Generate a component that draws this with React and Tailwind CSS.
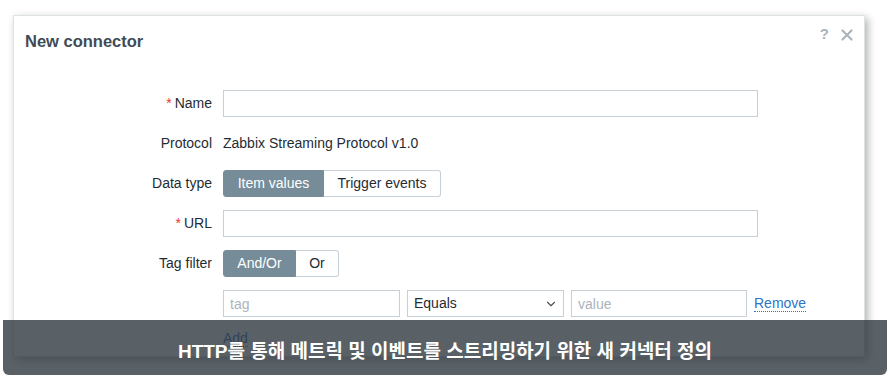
import React from "react";
import { ChevronDown } from "lucide-react";

const label = "flex items-center justify-end text-[14px] text-[#1f2c33]";
const input =
  "h-[27px] border border-[#c7d0d6] bg-white px-[6px] text-[14px] text-[#1f2c33] placeholder-[#acb4ba] outline-none";

function Req({ children }) {
  return (
    <div className={label}>
      <span className="text-[#e33734] mr-[3px]">*</span>
      {children}
    </div>
  );
}

function Segmented({ options, active }) {
  return (
    <div className="flex h-[27px]">
      {options.map((o, i) => (
        <div
          key={o.label}
          className={
            (i === active
              ? "bg-[#768d99] text-white border-[#768d99] "
              : "bg-white text-[#1f2c33] border-[#c7d0d6] ") +
            (i === 0 ? "rounded-l-[3px] " : "rounded-r-[3px] border-l-0 ") +
            "border flex items-center justify-center text-[14px]"
          }
          style={{ width: o.w }}
        >
          {o.label}
        </div>
      ))}
    </div>
  );
}

export default function App() {
  return (
    <div
      className="relative w-[890px] h-[383px] overflow-hidden bg-white"
      style={{ fontFamily: '"Liberation Sans", Arial, sans-serif' }}
    >
      {/* dialog */}
      <div className="ml-[13px] mt-[15px] w-[852px] h-[342px] bg-white border border-[#dde2e5] shadow-[3px_3px_8px_rgba(0,0,0,0.3)]">
        <div className="relative h-[51px] flex items-center px-[11px]">
          <h2 className="text-[16.5px] font-bold text-[#3f4b56]">New connector</h2>
          <div className="absolute right-[11px] top-[7px] flex items-center gap-[12px] text-[#aab4bc]">
            <span className="text-[15px] font-bold">?</span>
            <svg width="12" height="12" viewBox="0 0 12 12" className="mt-[1px]">
              <path d="M1.5 1.5l9 9M10.5 1.5l-9 9" stroke="currentColor" strokeWidth="2.2" strokeLinecap="round" />
            </svg>
          </div>
        </div>

        <div className="mt-[23px] grid grid-cols-[198px_1fr] gap-x-[11px] gap-y-[13px] auto-rows-[27px]">
          <Req>Name</Req>
          <div>
            <input className={input + " w-[535px]"} />
          </div>

          <div className={label}>Protocol</div>
          <div className="flex items-center text-[14px] text-[#1f2c33]">Zabbix Streaming Protocol v1.0</div>

          <div className={label}>Data type</div>
          <Segmented
            active={0}
            options={[
              { label: "Item values", w: 101 },
              { label: "Trigger events", w: 117 },
            ]}
          />

          <Req>URL</Req>
          <div>
            <input className={input + " w-[535px]"} />
          </div>

          <div className={label}>Tag filter</div>
          <Segmented
            active={0}
            options={[
              { label: "And/Or", w: 73 },
              { label: "Or", w: 43 },
            ]}
          />

          <div />
          <div className="flex items-center gap-[7px]">
            <input className={input + " w-[177px]"} placeholder="tag" />
            <div className={input + " w-[157px] flex items-center justify-between pr-[5px]"}>
              <span>Equals</span>
              <ChevronDown size={14} strokeWidth={2} className="text-[#4a545c]" />
            </div>
            <input className={input + " w-[176px]"} placeholder="value" />
            <span className="text-[14px] text-[#2c74c7] border-b border-dotted border-[#2c74c7] leading-[16px]">
              Remove
            </span>
          </div>

          <div />
          <div className="flex items-start">
            <span className="text-[14px] text-[#2c74c7] border-b border-dotted border-[#2c74c7] leading-[16px]">
              Add
            </span>
          </div>
        </div>
      </div>

      {/* caption overlay */}
      <div className="absolute left-[3px] top-[320px] w-[884px] h-[55px] rounded-b-[6px] bg-[rgba(48,56,64,0.8)] flex items-center justify-center pt-[9px]">
        <span
          className="text-white font-bold text-[19px]"
          style={{ fontFamily: '"Liberation Sans", "Noto Sans CJK KR", sans-serif' }}
        >
          HTTP를 통해 메트릭 및 이벤트를 스트리밍하기 위한 새 커넥터 정의
        </span>
      </div>
    </div>
  );
}
